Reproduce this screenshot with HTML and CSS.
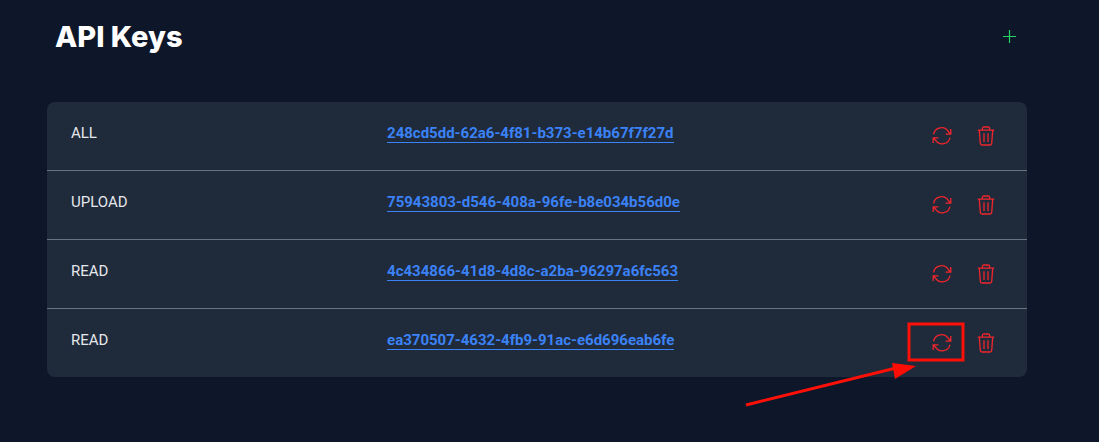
FILE: index.html
```html
<!DOCTYPE html>
<html lang="en">
<head>
<meta charset="utf-8">
<meta name="viewport" content="width=device-width, initial-scale=1">
<title>API Keys</title>
<link rel="stylesheet" href="styles.css">
</head>
<body>
<svg class="symbols" aria-hidden="true">
  <symbol id="refresh" viewBox="0 0 20 20">
    <path d="M1.6 8.4A8 8 0 0 1 16.5 5.8L18.5 8M18.8 2.9V8.1H13.6M18 11.6A8 8 0 0 1 3.5 14.2L1.5 12M1.2 17.1V11.9H6.4"/>
  </symbol>
  <symbol id="trash" viewBox="0 0 20 20">
    <path d="M1.8 4.2H18.2M3.3 4.4L4.3 17.5Q4.4 19 5.9 19H14.1Q15.6 19 15.7 17.5L16.7 4.4M6.4 4.2V2.6Q6.4 1 8 1H12Q13.6 1 13.6 2.6V4.2M8 7.2V16M12 7.2V16"/>
  </symbol>
</svg>
<main class="page">
  <header class="header">
    <h1 class="title">API Keys</h1>
    <button class="icon-button add" type="button" aria-label="Add API key">
      <svg class="plus" viewBox="0 0 14 14"><path d="M7.5 1V14M1 7.5H14"/></svg>
    </button>
  </header>
  <table class="keys">
    <tbody>
      <tr>
        <td class="scope">ALL</td>
        <td class="key"><a class="key-link" href="#">248cd5dd-62a6-4f81-b373-e14b67f7f27d</a></td>
        <td class="actions"><div class="buttons">
          <button class="icon-button" type="button" aria-label="Regenerate"><svg class="icon"><use href="#refresh"/></svg></button>
          <button class="icon-button" type="button" aria-label="Delete"><svg class="icon"><use href="#trash"/></svg></button>
        </div></td>
      </tr>
      <tr>
        <td class="scope">UPLOAD</td>
        <td class="key"><a class="key-link" href="#">75943803-d546-408a-96fe-b8e034b56d0e</a></td>
        <td class="actions"><div class="buttons">
          <button class="icon-button" type="button" aria-label="Regenerate"><svg class="icon"><use href="#refresh"/></svg></button>
          <button class="icon-button" type="button" aria-label="Delete"><svg class="icon"><use href="#trash"/></svg></button>
        </div></td>
      </tr>
      <tr>
        <td class="scope">READ</td>
        <td class="key"><a class="key-link" href="#">4c434866-41d8-4d8c-a2ba-96297a6fc563</a></td>
        <td class="actions"><div class="buttons">
          <button class="icon-button" type="button" aria-label="Regenerate"><svg class="icon"><use href="#refresh"/></svg></button>
          <button class="icon-button" type="button" aria-label="Delete"><svg class="icon"><use href="#trash"/></svg></button>
        </div></td>
      </tr>
      <tr>
        <td class="scope">READ</td>
        <td class="key"><a class="key-link" href="#">ea370507-4632-4fb9-91ac-e6d696eab6fe</a></td>
        <td class="actions"><div class="buttons">
          <button class="icon-button" type="button" aria-label="Regenerate"><svg class="icon"><use href="#refresh"/></svg>
            <svg class="callout" viewBox="0 0 224 90" aria-hidden="true">
              <rect class="callout-line" x="169" y="3" width="54" height="36"/>
              <path class="callout-line" d="M6 84L156 47"/>
              <path class="callout-head" d="M152 42L176 45L155 58Z"/>
            </svg>
          </button>
          <button class="icon-button" type="button" aria-label="Delete"><svg class="icon"><use href="#trash"/></svg></button>
        </div></td>
      </tr>
    </tbody>
  </table>
</main>
</body>
</html>
```
FILE: styles.css
```css
* { box-sizing: border-box; }
body {
  margin: 0;
  background: #0e1729;
  color: #e5e7eb;
  font-family: Roboto, "Liberation Sans", sans-serif;
}
.symbols { position: absolute; width: 0; height: 0; }
.page { padding: 16px 72px 64px 47px; }
.header {
  display: flex;
  align-items: center;
  justify-content: space-between;
  height: 42px;
  margin-bottom: 44px;
  padding: 0 8px;
}
.title {
  margin: 0;
  color: #fff;
  font: 800 29px/42px Inter, sans-serif;
}
.icon-button {
  position: relative;
  display: block;
  padding: 0;
  border: 0;
  background: none;
  color: #f0262c;
  cursor: pointer;
}
.add { padding: 0 3px 2px; }
.plus { display: block; width: 14px; height: 14px; fill: none; stroke: #22d45e; stroke-width: 1.2; }
.keys {
  width: 100%;
  border-spacing: 0;
  table-layout: fixed;
  background: #1f2a3b;
  border-radius: 8px;
}
.keys td {
  height: 69px;
  padding: 20px 24px;
  vertical-align: top;
  line-height: 22px;
}
.keys tr:not(:last-child) td { border-bottom: 1px solid #6b7280; }
.keys tr:last-child td { height: 68px; }
.keys .scope { width: 32.25%; font-size: 15px; }
.keys .key { width: 43%; padding-top: 22px; font-size: 15px; font-weight: 700; line-height: 18px; }
.key-link {
  display: inline-block;
  color: #3b82f6;
  border-bottom: 1px solid;
  text-decoration: none;
}
.keys .actions { padding: 24px 31px 0 0; }
.buttons { display: flex; justify-content: flex-end; gap: 24px; }
.icon { display: block; width: 20px; height: 20px; fill: none; stroke: currentColor; stroke-width: 1.3; }
.callout {
  position: absolute;
  top: -12px;
  left: -192px;
  width: 224px;
  height: 90px;
  overflow: visible;
  pointer-events: none;
}
.callout-line { fill: none; stroke: #fc1008; stroke-width: 3; }
.callout-head { fill: #fc0d05; }
```
